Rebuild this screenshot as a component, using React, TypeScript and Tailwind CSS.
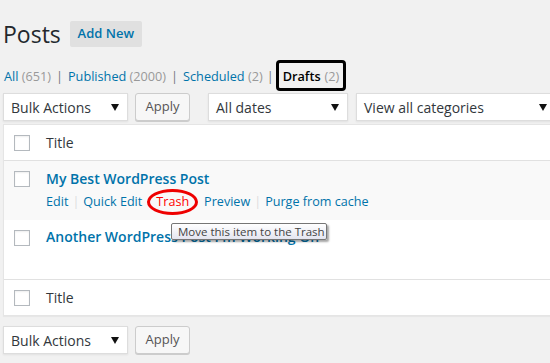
import React from 'react';

const font = { fontFamily: '"Open Sans", "Noto Sans", sans-serif' };

function Checkbox() {
  return (
    <span className="block w-[16px] h-[16px] border border-[#b4b9be] bg-white shadow-[inset_0_1px_2px_rgba(0,0,0,0.07)]" />
  );
}

function Select({ label, className }: { label: string; className: string }) {
  return (
    <div
      className={`h-[28px] shrink-0 bg-white border border-[#ddd] shadow-[0_1px_2px_rgba(0,0,0,0.07)] flex items-center justify-between pl-[7px] pr-[8px] text-[14px] text-[#32373c] ${className}`}
    >
      <span>{label}</span>
      <svg width="8" height="7" viewBox="0 0 8 7">
        <path d="M0 0h8L4 7z" fill="#111" />
      </svg>
    </div>
  );
}

function ApplyButton() {
  return (
    <div className="h-[28px] w-[55px] shrink-0 flex items-center justify-center bg-[#f7f7f7] border border-[#ccc] rounded-[3px] shadow-[0_1px_0_#ccc] text-[13px] text-[#555]">
      Apply
    </div>
  );
}

function Sep() {
  return <span className="text-[#72777c] mx-[5px]">|</span>;
}

function ActionSep() {
  return <span className="text-[#ddd] mx-[4px]">|</span>;
}

export default function App() {
  return (
    <div className="w-[550px] h-[363px] overflow-hidden bg-[#f1f1f1] pl-[3px] relative" style={font}>
      {/* Heading */}
      <div className="flex items-center pt-[21px]">
        <h1 className="text-[23px] leading-[26px] text-[#23282d] font-normal">Posts</h1>
        <div className="ml-[9px] h-[26px] w-[72px] flex items-center justify-center bg-[#e0e0e0] rounded-[2px] text-[13px] font-semibold text-[#0073aa]">
          Add New
        </div>
      </div>

      {/* Status filters */}
      <div className="mt-[13px] h-[31px] flex items-center text-[12.7px] pl-[1px] pt-[3px]">
        <span className="text-[#0073aa]">All <span className="text-[#999]">(651)</span></span>
        <Sep />
        <span className="text-[#0073aa]">Published <span className="text-[#999]">(2000)</span></span>
        <Sep />
        <span className="text-[#0073aa]">Scheduled <span className="text-[#999]">(2)</span></span>
        <span className="text-[#72777c] ml-[4px] mr-[2px]">|</span>
        <span className="h-[31px] -mt-[3px] pt-[3px] border-[3px] border-black rounded-[4px] px-[4px] flex items-center text-[#000] font-semibold">
          Drafts<span className="text-[#999] font-normal ml-[4px]">(2)</span>
        </span>
      </div>

      {/* Top tablenav */}
      <div className="mt-[2px] flex items-center">
        <Select label="Bulk Actions" className="w-[125px]" />
        <div className="ml-[7px]"><ApplyButton /></div>
        <Select label="All dates" className="w-[140px] ml-[18px]" />
        <Select label="View all categories" className="w-[200px] ml-[8px]" />
      </div>

      {/* Table */}
      <div className="mt-[3px] w-[560px] bg-white border border-[#e5e5e5] shadow-[0_1px_1px_rgba(0,0,0,0.04)]">
        <div className="h-[36px] flex items-center border-b border-[#e1e1e1]">
          <div className="w-[42px] pl-[10px]"><Checkbox /></div>
          <span className="text-[14px] text-[#32373c]">Title</span>
        </div>

        <div className="h-[59px] bg-[#f9f9f9] flex">
          <div className="w-[42px] pl-[10px] pt-[10px]"><Checkbox /></div>
          <div className="pt-[8px]">
            <div className="text-[14px] leading-[20px] font-semibold text-[#0073aa]">My Best WordPress Post</div>
            <div className="mt-[3px] text-[12.6px] leading-[20px] text-[#0073aa] flex items-center">
              <span>Edit</span>
              <ActionSep />
              <span>Quick Edit</span>
              <span className="ml-[5px] border-[3px] border-[#e00] rounded-[50%] px-[6px] h-[26px] flex items-center text-[#f00] -my-[3px]">
                Trash
              </span>
              <span className="ml-[6px]">Preview</span>
              <ActionSep />
              <span>Purge from cache</span>
            </div>
          </div>
        </div>

        <div className="h-[60px] flex border-b border-[#e1e1e1]">
          <div className="w-[42px] pl-[10px] pt-[10px]"><Checkbox /></div>
          <div className="pt-[7px] text-[14px] leading-[20px] font-semibold text-[#0073aa] whitespace-nowrap">
            Another WordPress Post I&apos;m Working On
          </div>
        </div>

        <div className="h-[35px] flex items-center">
          <div className="w-[42px] pl-[10px]"><Checkbox /></div>
          <span className="text-[14px] text-[#32373c]">Title</span>
        </div>
      </div>

      {/* Bottom tablenav */}
      <div className="mt-[10px] flex items-center">
        <Select label="Bulk Actions" className="w-[125px]" />
        <div className="ml-[7px]"><ApplyButton /></div>
      </div>

      {/* Tooltip */}
      <div className="absolute left-[171px] top-[223px] w-[156px] h-[17px] border border-[#767676] bg-gradient-to-b from-white to-[#e4e5f0] shadow-[2px_2px_2px_rgba(0,0,0,0.35)] rounded-[2px] flex items-center pl-[6px] text-[11.5px] text-[#444] whitespace-nowrap">
        Move this item to the Trash
      </div>
    </div>
  );
}
